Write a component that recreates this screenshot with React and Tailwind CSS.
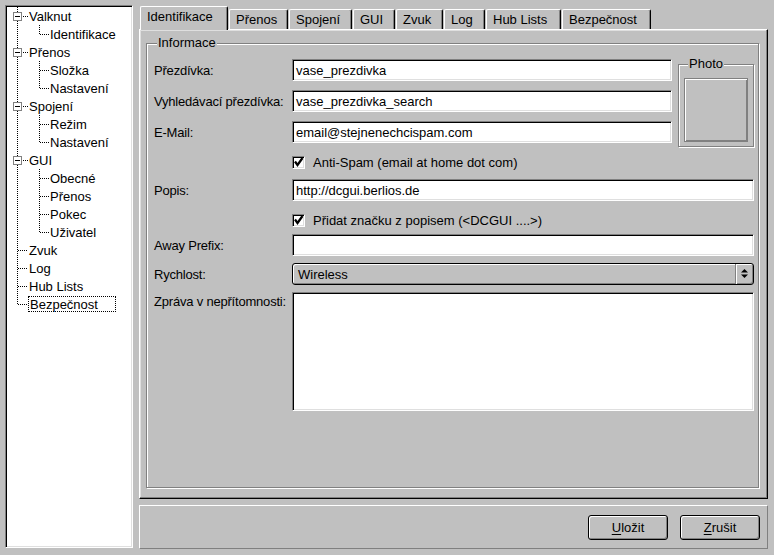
import React from 'react';

const sunken =
  "border border-t-[#808080] border-l-[#808080] border-b-white border-r-white shadow-[inset_1px_1px_0_#000,inset_-1px_-1px_0_#dfdfdf] bg-white";
const etched = "border border-[#808080] shadow-[inset_1px_1px_0_#fff,1px_1px_0_#fff]";

const tree = [
  { t: 'Valknut', lvl: 0 },
  { t: 'Identifikace', lvl: 1 },
  { t: 'Přenos', lvl: 0 },
  { t: 'Složka', lvl: 1 },
  { t: 'Nastavení', lvl: 1 },
  { t: 'Spojení', lvl: 0 },
  { t: 'Režim', lvl: 1 },
  { t: 'Nastavení', lvl: 1 },
  { t: 'GUI', lvl: 0 },
  { t: 'Obecné', lvl: 1 },
  { t: 'Přenos', lvl: 1 },
  { t: 'Pokec', lvl: 1 },
  { t: 'Uživatel', lvl: 1 },
  { t: 'Zvuk', lvl: 0 },
  { t: 'Log', lvl: 0 },
  { t: 'Hub Lists', lvl: 0 },
  { t: 'Bezpečnost', lvl: 0, focus: true },
];

const cy = (i) => 16 + 18 * i;
const boxes = [0, 2, 5, 8];
const groups = [
  [0, 1],
  [2, 4],
  [5, 7],
  [8, 12],
];

function TreeLines() {
  return (
    <svg
      className="absolute left-0 top-0 pointer-events-none"
      width="126"
      height="541"
      viewBox="6 6 126 541"
    >
      <g stroke="#000" strokeWidth="1" strokeDasharray="1 1" fill="none">
        <line x1="17.5" y1="7" x2="17.5" y2={cy(16) + 1} />
        {groups.map(([p, last]) => (
          <line key={'v' + p} x1="39.5" y1={cy(p) + 9} x2="39.5" y2={cy(last) + 1} />
        ))}
        {tree.map((n, i) => {
          if (n.lvl === 1)
            return <line key={'h' + i} x1="40" y1={cy(i) + 0.5} x2="49" y2={cy(i) + 0.5} />;
          if (boxes.includes(i))
            return <line key={'h' + i} x1="23" y1={cy(i) + 0.5} x2="28" y2={cy(i) + 0.5} />;
          return <line key={'h' + i} x1="18" y1={cy(i) + 0.5} x2="28" y2={cy(i) + 0.5} />;
        })}
      </g>
      {boxes.map((i) => (
        <g key={'b' + i}>
          <rect x="13.5" y={cy(i) - 3.5} width="8" height="8" fill="#fff" stroke="#808080" />
          <line x1="15" y1={cy(i) + 0.5} x2="20" y2={cy(i) + 0.5} stroke="#000" />
        </g>
      ))}
    </svg>
  );
}

function Tree() {
  return (
    <div className="w-[128px] h-[543px] relative border border-t-[#808080] border-l-[#808080] border-r-white border-b-white shadow-[inset_1px_1px_0_#000,inset_-1px_-1px_0_#dfdfdf] bg-white">
      <TreeLines />
      <div className="pt-[1px] flex flex-col">
        {tree.map((n, i) => (
          <div key={i} className="h-[18px] flex items-center">
            {n.focus ? (
              <span className="ml-[22px] w-[88px] h-[16px] leading-[15px] border border-dotted border-black pl-[1px]">
                {n.t}
              </span>
            ) : (
              <span className={`${n.lvl === 0 ? 'ml-[23px]' : 'ml-[44px]'} pt-[2px] leading-[18px]`}>{n.t}</span>
            )}
          </div>
        ))}
      </div>
    </div>
  );
}

const tabs = [
  { label: 'Identifikace', w: 'w-[88px]', sel: true },
  { label: 'Přenos', w: 'w-[59px]' },
  { label: 'Spojení', w: 'w-[63px]' },
  { label: 'GUI', w: 'w-[42px]' },
  { label: 'Zvuk', w: 'w-[47px]' },
  { label: 'Log', w: 'w-[41px]' },
  { label: 'Hub Lists', w: 'w-[75px]' },
  { label: 'Bezpečnost', w: 'w-[89px]' },
];

function Tabs() {
  return (
    <div className="h-[24px] flex items-end gap-[1px] pl-[1px]">
      {tabs.map((t) =>
        t.sel ? (
          <div
            key={t.label}
            className={`${t.w} h-[24px] -mb-[1px] relative z-10 bg-[#c0c0c0] border-l border-t border-r border-l-white border-t-white border-r-black rounded-t-[2px] shadow-[inset_-1px_0_0_#808080] pl-[6px] leading-[20px] whitespace-nowrap`}
          >
            {t.label}
          </div>
        ) : (
          <div
            key={t.label}
            className={`${t.w} h-[20px] bg-[#c0c0c0] border-l border-t border-r border-l-white border-t-white border-r-black rounded-t-[2px] shadow-[inset_-1px_0_0_#808080] pl-[6px] leading-[19px] whitespace-nowrap`}
          >
            {t.label}
          </div>
        )
      )}
    </div>
  );
}

function Input({ value, w }) {
  return (
    <div className={`${w} h-[22px] ${sunken} pl-[3px] leading-[21px] whitespace-nowrap overflow-hidden`}>
      {value}
    </div>
  );
}

function Row({ label, children, className = '' }) {
  return (
    <div className={`flex items-center ${className}`}>
      <div className="w-[138px] h-[22px] leading-[24px] tracking-[-0.2px] whitespace-nowrap">{label}</div>
      {children}
    </div>
  );
}

function Check({ label, className = '' }) {
  return (
    <div className={`flex items-center pl-[138px] ${className}`}>
      <div className="w-[13px] h-[13px] relative border border-t-[#808080] border-l-[#808080] border-r-white border-b-white shadow-[inset_1px_1px_0_#000,inset_-1px_-1px_0_#dfdfdf] bg-white">
        <svg className="absolute left-0 top-0 overflow-visible" width="11" height="11" viewBox="0 0 11 11">
          <path d="M2 4.5 L4.5 8 L9.5 1" stroke="#000" strokeWidth="2.2" fill="none" />
        </svg>
      </div>
      <span className="ml-[8px] leading-[13px] whitespace-nowrap">{label}</span>
    </div>
  );
}

function Combo() {
  return (
    <div className="w-[462px] h-[22px] flex rounded-[3px] border border-black bg-[#c0c0c0] shadow-[inset_1px_1px_0_#fff,inset_-1px_-1px_0_#808080]">
      <span className="pl-[5px] leading-[21px]">Wireless</span>
      <div className="ml-auto w-[18px] h-[20px] border-l border-l-[#808080] shadow-[inset_1px_0_0_#fff]">
        <svg width="17" height="20" viewBox="0 0 17 20">
          <polygon points="5,8.5 8.5,5 12,8.5" fill="#000" />
          <polygon points="5,10.5 8.5,14 12,10.5" fill="#000" />
        </svg>
      </div>
    </div>
  );
}

function Button({ u, rest }) {
  return (
    <div className="w-[80px] h-[25px] rounded-[3px] border border-black bg-[#c0c0c0] shadow-[inset_1px_1px_0_#fff,inset_-1px_-1px_0_#808080] flex items-center justify-center leading-[14px]">
      <span>
        <span className="underline underline-offset-2">{u}</span>
        {rest}
      </span>
    </div>
  );
}

export default function App() {
  return (
    <div className="w-[774px] h-[555px] bg-[#c0c0c0] flex gap-[6px] p-[5px] overflow-hidden text-black text-[13px] font-['Liberation_Sans',Arial,sans-serif]">
      <Tree />
      <div className="w-[629px] flex flex-col">
        <Tabs />
        <div className="h-[470px] border border-t-white border-l-white border-r-black border-b-black shadow-[inset_-1px_-1px_0_#808080,inset_1px_1px_0_#dfdfdf] pt-[13px] pl-[6px]">
          <div className={`w-[613px] h-[445px] relative ${etched} pt-[15px] pl-[7px]`}>
            <span className="absolute left-[10px] top-[-8px] px-[1px] bg-[#c0c0c0] leading-[14px]">Informace</span>
            <div className="flex items-start">
              <div className="flex flex-col gap-[9px]">
                <Row label="Přezdívka:">
                  <Input w="w-[380px]" value="vase_prezdivka" />
                </Row>
                <Row label="Vyhledávací přezdívka:">
                  <Input w="w-[380px]" value="vase_prezdivka_search" />
                </Row>
                <Row label="E-Mail:">
                  <Input w="w-[380px]" value="email@stejnenechcispam.com" />
                </Row>
              </div>
              <div className={`ml-[6px] mt-[5px] w-[76px] h-[83px] relative ${etched} pt-[13px] pl-[5px]`}>
                <span className="absolute left-[9px] top-[-8px] px-[1px] bg-[#c0c0c0] leading-[14px]">Photo</span>
                <div className="w-[64px] h-[64px] border border-[#808080] shadow-[inset_1px_1px_0_#fff,inset_-1px_-1px_0_#808080]" />
              </div>
            </div>
            <Check className="mt-[9px]" label="Anti-Spam (email at home dot com)" />
            <Row className="mt-[10px]" label="Popis:">
              <Input w="w-[462px]" value="http://dcgui.berlios.de" />
            </Row>
            <Check className="mt-[13px]" label="Přidat značku z popisem (<DCGUI ....>)" />
            <Row className="mt-[7px]" label="Away Prefix:">
              <Input w="w-[462px]" value="" />
            </Row>
            <Row className="mt-[7px]" label="Rychlost:">
              <Combo />
            </Row>
            <div className="mt-[7px] flex items-start">
              <div className="w-[138px] mt-[2px] leading-[15px] tracking-[-0.2px] whitespace-nowrap">Zpráva v nepřítomnosti:</div>
              <div className={`w-[462px] h-[119px] ${sunken}`} />
            </div>
          </div>
        </div>
        <div className="mt-[6px] h-[44px] border border-t-white border-l-white border-r-[#808080] border-b-[#808080] flex justify-end items-start gap-[12px] pt-[9px] pr-[7px]">
          <Button u="U" rest="ložit" />
          <Button u="Z" rest="rušit" />
        </div>
      </div>
    </div>
  );
}
